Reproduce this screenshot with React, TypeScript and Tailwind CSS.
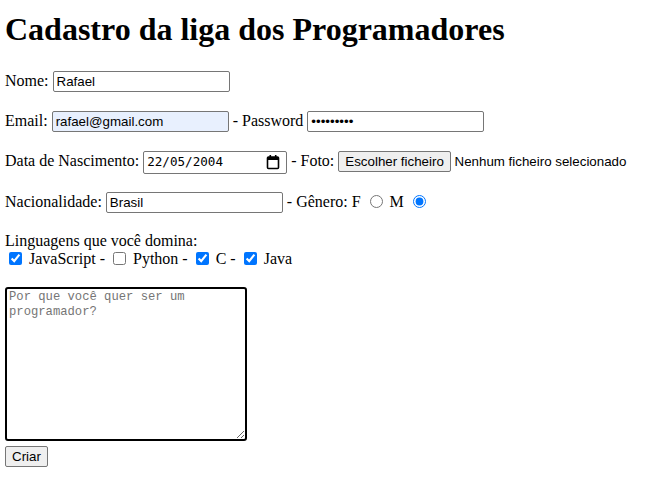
import React from "react";

const field =
  "h-[21px] w-[177px] rounded-[2px] border border-[#767676] px-[3px] align-baseline font-['Liberation_Sans',Arial,sans-serif] text-[13.3333px] text-black outline-none";

const CalendarIcon = () => (
  <svg width="14" height="16" viewBox="0 0 14 16" className="shrink-0">
    <rect x="1.5" y="3" width="11" height="11.5" rx="1" fill="none" stroke="#000" strokeWidth="1.6" />
    <rect x="1.5" y="3" width="11" height="3" fill="#000" />
    <rect x="3.5" y="1" width="1.6" height="3" fill="#000" />
    <rect x="8.9" y="1" width="1.6" height="3" fill="#000" />
  </svg>
);

const Check = ({ checked }: { checked: boolean }) => (
  <input
    type="checkbox"
    defaultChecked={checked}
    className="m-[0px_3px_0px_4px] h-[13px] w-[13px] shrink-0"
  />
);

const App = () => {
  return (
    <div className="pl-[5px] pb-4 font-['Liberation_Serif','Times_New_Roman',serif] text-[16px] text-black">
      <h1 className="mt-[11px] mb-[21px] text-[32px] font-bold leading-[37px]">
        Cadastro da liga dos Programadores
      </h1>
      <form onSubmit={(e) => e.preventDefault()}>
        <p className="my-4">
          Nome: <input type="text" defaultValue="Rafael" className={field} />
        </p>
        <p className="my-4">
          Email:{" "}
          <input
            type="email"
            defaultValue="rafael@gmail.com"
            className={`${field} bg-[#e8f0fe]`}
          />{" "}
          - Password{" "}
          <input type="password" defaultValue="123456789" className={field} />
        </p>
        <p className="my-4">
          Data de Nascimento:{" "}
          <span className="inline-flex h-[23px] w-[144px] items-center justify-between rounded-[2px] border border-[#767676] pl-[3px] pr-[6px] align-baseline font-['DejaVu_Sans_Mono',monospace] text-[12.6px]">
            <span>22/05/2004</span>
            <CalendarIcon />
          </span>{" "}
          - Foto:{" "}
          <span className="font-['Liberation_Sans',Arial,sans-serif] text-[13.3333px]">
            <button
              type="button"
              className="h-[21px] rounded-[2px] border border-[#767676] bg-[#efefef] px-[6px] align-baseline"
            >
              Escolher ficheiro
            </button>{" "}
            Nenhum ficheiro selecionado
          </span>
        </p>
        <p className="my-4">
          Nacionalidade:{" "}
          <input type="text" defaultValue="Brasil" className={field} /> - Gênero: F{" "}
          <input
            type="radio"
            name="genero"
            className="m-[0px_3px_0px_5px] h-[13px] w-[13px] align-[-1px]"
          />{" "}
          M{" "}
          <input
            type="radio"
            name="genero"
            defaultChecked
            className="m-[0px_3px_0px_5px] h-[13px] w-[13px] align-[-1px]"
          />
        </p>
        <div className="my-4 pt-[2px] leading-[18px]">
          <div>Linguagens que você domina:</div>
          <div className="flex h-[18px] items-center whitespace-pre">
            <Check checked />
            <span> JavaScript - </span>
            <Check checked={false} />
            <span> Python - </span>
            <Check checked />
            <span> C - </span>
            <Check checked />
            <span> Java</span>
          </div>
        </div>
        <textarea
          rows={10}
          cols={30}
          placeholder="Por que você quer ser um programador?"
          className="mt-[19px] block h-[154px] w-[242px] resize rounded-[3px] border-2 border-black px-[2px] py-[1px] font-['Liberation_Mono',monospace] text-[12.2px] leading-[15px] outline-none placeholder:text-[#757575]"
        />
        <button
          type="submit"
          className="mt-[5px] block h-[21px] rounded-[2px] border border-[#767676] bg-[#efefef] px-[6px] font-['Liberation_Sans',Arial,sans-serif] text-[13.3333px]"
        >
          Criar
        </button>
      </form>
    </div>
  );
};

export default App;
